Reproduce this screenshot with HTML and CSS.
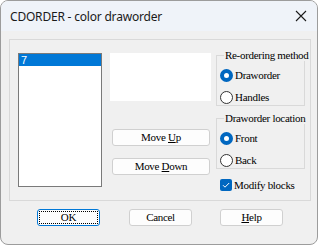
FILE: index.html
```html
<!DOCTYPE html>
<html>
<head>
<meta charset="utf-8">
<link rel="stylesheet" href="styles.css">
</head>
<body>
<div class="window">
  <div class="titlebar">
    <span class="title">CDORDER - color draworder</span>
    <svg class="close" width="12" height="12" viewBox="0 0 12 12"><path d="M1 1 L11 11 M11 1 L1 11" stroke="#1b1b1b" stroke-width="1.1" fill="none"/></svg>
  </div>
  <div class="content">
    <div class="frame">
      <div class="listbox">
        <div class="item selected">7</div>
      </div>
      <div class="middle">
        <div class="preview"></div>
        <div class="btn btn-move first"><span>Move <u>U</u>p</span></div>
        <div class="btn btn-move second"><span>Move <u>D</u>own</span></div>
      </div>
      <div class="right">
        <div class="group g1">
          <span class="legend">Re-ordering method</span>
          <div class="opt o1"><span class="radio on"></span><span>Draworder</span></div>
          <div class="opt o2"><span class="radio"></span><span>Handles</span></div>
        </div>
        <div class="group g2">
          <span class="legend">Draworder location</span>
          <div class="opt o1"><span class="radio on"></span><span>Front</span></div>
          <div class="opt o2"><span class="radio"></span><span>Back</span></div>
        </div>
        <div class="check-row">
          <span class="check"><svg width="12" height="12" viewBox="0 0 12 12"><path d="M3 6.2 L5 8.2 L9.2 4" stroke="#fff" stroke-width="1" fill="none"/></svg></span>
          <span>Modify blocks</span>
        </div>
      </div>
    </div>
    <div class="buttons">
      <div class="btn btn-ok"><span class="focus">OK</span></div>
      <div class="btn btn-cancel"><span>Cancel</span></div>
      <div class="btn btn-help"><span><u>H</u>elp</span></div>
    </div>
  </div>
</div>
</body>
</html>
```
FILE: styles.css
```css
html, body {
  margin: 0;
  padding: 0;
  background: #ffffff;
}
.window {
  width: 318px;
  height: 245px;
  box-sizing: border-box;
  border: 1px solid #9c9c9c;
  border-radius: 8px;
  overflow: hidden;
  background: #f0f0f0;
  font-family: "Liberation Serif", serif;
  font-size: 11px;
  letter-spacing: -0.3px;
  color: #000;
}
.titlebar {
  height: 30px;
  background: #eff3f9;
  display: flex;
  align-items: center;
  justify-content: space-between;
  padding: 0 9px 0 9px;
}
.title {
  font-family: "Noto Sans", sans-serif;
  font-size: 12px;
  letter-spacing: -0.2px;
  color: #1a1a1a;
  margin-top: 1px;
}
.close {
  display: block;
  margin-right: 1px;
}
.content {
  padding: 8px 0 0 8px;
}
.frame {
  width: 302px;
  height: 162px;
  box-sizing: border-box;
  border: 1px solid #d9d9d9;
  display: flex;
  padding: 13px 0 0 8px;
}
.listbox {
  width: 84px;
  height: 134px;
  box-sizing: border-box;
  border: 1px solid #7a7a7a;
  background: #fff;
  padding: 0;
}
.item {
  height: 12px;
  line-height: 12px;
  font-family: "Liberation Sans", sans-serif;
  font-size: 11px;
  letter-spacing: 0;
  padding-left: 2px;
}
.item.selected {
  background: #0078d7;
  color: #fff;
}
.middle {
  width: 101px;
  margin-left: 8px;
  display: flex;
  flex-direction: column;
}
.preview {
  height: 48px;
  background: #fff;
}
.btn {
  box-sizing: border-box;
  height: 17px;
  border: 1px solid #d0d0d0;
  border-radius: 3px;
  background: #fdfdfd;
  display: flex;
  align-items: center;
  justify-content: center;
  line-height: 13px;
}
.btn u {
  text-decoration: underline;
  text-underline-offset: 1px;
}
.btn-move {
  width: 98px;
  margin-left: 2px;
}
.btn-move.first {
  margin-top: 28px;
}
.btn-move.second {
  margin-top: 12px;
}
.right {
  width: 89px;
  margin-left: 5px;
  display: flex;
  flex-direction: column;
}
.group {
  box-sizing: border-box;
  border: 1px solid #d9d9d9;
  position: relative;
}
.g1 {
  margin-top: 2px;
  height: 51px;
}
.g2 {
  margin-top: 12px;
  height: 51px;
}
.legend {
  position: absolute;
  top: -7px;
  left: 7px;
  background: #f0f0f0;
  padding: 0 1px;
  line-height: 12px;
  white-space: nowrap;
}
.opt {
  display: flex;
  align-items: center;
  height: 14px;
  padding-left: 3px;
}
.opt.o1 {
  margin-top: 12px;
}
.opt.o2 {
  margin-top: 8px;
}
.radio {
  width: 13px;
  height: 13px;
  box-sizing: border-box;
  border-radius: 50%;
  border: 1px solid #333;
  background: #fff;
  margin-right: 2px;
  flex: none;
}
.radio.on {
  border: 4px solid #0067c0;
  background: #fff;
}
.check-row {
  display: flex;
  align-items: center;
  margin-top: 10px;
  padding-left: 4px;
  height: 12px;
}
.check {
  width: 12px;
  height: 12px;
  border-radius: 2px;
  background: #0067c0;
  margin-right: 2px;
  flex: none;
}
.check svg {
  display: block;
}
.buttons {
  display: flex;
  padding: 8px 0 0 28px;
}
.btn-ok, .btn-cancel, .btn-help {
  width: 63px;
}
.btn-ok {
  border-color: #0078d7;
  padding: 1px;
}
.focus {
  flex: 1;
  align-self: stretch;
  border: 1px dotted #000;
  display: flex;
  align-items: center;
  justify-content: center;
}
.btn-cancel {
  margin-left: 29px;
}
.btn-help {
  margin-left: 28px;
}
```
